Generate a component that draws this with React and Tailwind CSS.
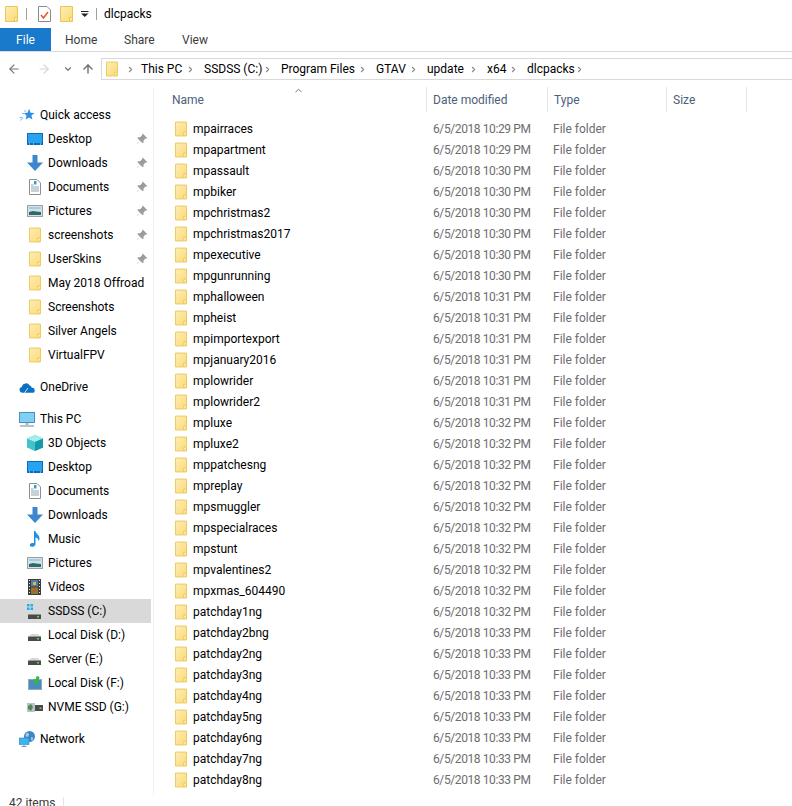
import { ArrowLeft, ArrowRight, ArrowUp, ChevronDown, ChevronRight, ChevronUp } from 'lucide-react';

const files = [
  ['mpairraces', '10:29'], ['mpapartment', '10:29'], ['mpassault', '10:30'], ['mpbiker', '10:30'],
  ['mpchristmas2', '10:30'], ['mpchristmas2017', '10:30'], ['mpexecutive', '10:30'], ['mpgunrunning', '10:30'],
  ['mphalloween', '10:31'], ['mpheist', '10:31'], ['mpimportexport', '10:31'], ['mpjanuary2016', '10:31'],
  ['mplowrider', '10:31'], ['mplowrider2', '10:31'], ['mpluxe', '10:32'], ['mpluxe2', '10:32'],
  ['mppatchesng', '10:32'], ['mpreplay', '10:32'], ['mpsmuggler', '10:32'], ['mpspecialraces', '10:32'],
  ['mpstunt', '10:32'], ['mpvalentines2', '10:32'], ['mpxmas_604490', '10:32'], ['patchday1ng', '10:32'],
  ['patchday2bng', '10:33'], ['patchday2ng', '10:33'], ['patchday3ng', '10:33'], ['patchday4ng', '10:33'],
  ['patchday5ng', '10:33'], ['patchday6ng', '10:33'], ['patchday7ng', '10:33'], ['patchday8ng', '10:33'],
];

const crumbs = [
  ['This PC', 'w-[63px]'], ['SSDSS (C:)', 'w-[77px]'], ['Program Files', 'w-[95px]'], ['GTAV', 'w-[51px]'],
  ['update', 'w-[60px]'], ['x64', 'w-[40px]'], ['dlcpacks', 'w-[66px]'],
];

const Folder = ({ className = 'w-[13px] h-[16px]' }) => (
  <svg viewBox="0 0 13 16" className={className}>
    <defs>
      <linearGradient id="fold" x1="0" y1="0" x2="1" y2="1">
        <stop offset="0" stopColor="#fdeeb4" />
        <stop offset="1" stopColor="#fbd977" />
      </linearGradient>
    </defs>
    <path d="M.5.5h12v15H.5z" fill="url(#fold)" stroke="#ecc655" />
    <path d="M9.5 15.5v-4h3" fill="#fff3c4" stroke="#ecc655" />
  </svg>
);

const Pin = () => (
  <svg viewBox="0 0 12 12" className="w-3 h-3">
    <path d="M7 .8l4.2 4.2-1 .7-.7-.2-2 2 .1 1.9-.9.9L4 7.8 1.4 10.8l-.4-.4L3.900 7.700 1.300 5.100l.9-.9 1.900.1 2-2-.2-.7z" fill="#9c9c9c" />
  </svg>
);

const QuickStar = () => (
  <svg viewBox="0 0 16 14" className="w-4 h-[14px]">
    <path d="M10 .8l1.500 3.900 4 .3-3.100 2.600 1 4L10 9.400l-3.400 2.200 1-4-3-2.600 4-.3z" fill="#2a8fe3" />
    <path d="M5 3h2.500M3 5.500h2.500M1 12.500l3-2.500M.5 9.500h3" stroke="#7ebcf0" fill="none" />
  </svg>
);

const DesktopIcon = () => (
  <svg viewBox="0 0 16 12" className="w-4 h-3">
    <rect width="16" height="12" fill="#0c6bbd" />
    <rect x="1" y="1" width="14" height="9" fill="#27a3ef" />
    <path d="M2 11h1M6 11h1M13 11h1" stroke="#cfe8fa" />
  </svg>
);

const DownloadIcon = () => (
  <svg viewBox="0 0 16 16" className="w-4 h-4">
    <path d="M5.500 0h5v7.500H16L8 16 0 7.500h5.500z" fill="#3e87d0" />
  </svg>
);

const DocumentIcon = () => (
  <svg viewBox="0 0 12 16" className="w-3 h-4">
    <path d="M.5.500h7.500l3.500 3.500v11.500H.5z" fill="#fff" stroke="#8e8e8e" />
    <path d="M2 6h2.500M2 8h8M2 10h8M2 12h8" stroke="#8ea3b5" />
    <path d="M5 2h2.500v3.500H5z" fill="#30a5c9" />
  </svg>
);

const PicturesIcon = () => (
  <svg viewBox="0 0 16 12" className="w-4 h-3">
    <rect x=".5" y=".5" width="15" height="11" fill="#cfe2ee" stroke="#a0a0a0" />
    <path d="M2 7l4-1 3 .5 5 .5v3H2z" fill="#2f6b62" />
    <path d="M2 2h12v2H2z" fill="#a7cbe2" />
  </svg>
);

const OneDriveIcon = () => (
  <svg viewBox="0 0 16 11" className="w-4 h-[11px]">
    <path d="M3.300 10.800a3 3 0 0 1-.6-5.900 4.300 4.300 0 0 1 8-1.300 3 3 0 0 1 2 2.200 2.600 2.600 0 0 1 3 2.400 2.500 2.500 0 0 1-2.600 2.600z" fill="#0b6fc2" />
    <path d="M5.500 10.800L9 6" stroke="#fff" strokeWidth=".8" />
  </svg>
);

const ThisPcIcon = () => (
  <svg viewBox="0 0 16 15" className="w-4 h-[15px]">
    <rect x=".5" y=".5" width="15" height="10" fill="#7fd0f5" stroke="#4d8fb8" />
    <path d="M6.500 11h3v2h-3z" fill="#a9b8c4" />
    <path d="M1 14h14" stroke="#9fb0bd" strokeWidth="1.500" />
  </svg>
);

const CubeIcon = () => (
  <svg viewBox="0 0 16 16" className="w-4 h-4">
    <path d="M8 0l8 3.500v9L8 16l-8-3.500v-9z" fill="#40c4cc" />
    <path d="M8 0l8 3.500L8 7 0 3.500z" fill="#a6ebed" />
    <path d="M8 7l8-3.500v9L8 16z" fill="#159ba8" />
  </svg>
);

const MusicIcon = () => (
  <svg viewBox="0 0 12 16" className="w-3 h-4">
    <path d="M5 0h1.500c.3 3 4.500 4 4 8-.2 1-.7 1.500-1 2 .2-2-1.500-3.300-3-3.500v6.500c0 2-2 2.800-3.800 2.800C1 15.800.5 14.500 1 13.500c.7-1.200 2.500-1.700 4-1.200z" fill="#1e8fe8" />
  </svg>
);

const VideosIcon = () => (
  <svg viewBox="0 0 13 16" className="w-[13px] h-4">
    <rect width="13" height="16" fill="#3c3c3c" />
    <rect x="3" y="1" width="7" height="6.500" fill="#4a7fb5" />
    <rect x="3" y="8.500" width="7" height="6.500" fill="#8c7a2e" />
    <path d="M5 3h3v3H5z" fill="#e3b62b" />
    <path d="M5 10h3v3H5z" fill="#c9552c" />
    <path d="M1 1.500h1M1 4.500h1M1 7.500h1M1 10.500h1M1 13.500h1M11 1.500h1M11 4.500h1M11 7.500h1M11 10.500h1M11 13.500h1" stroke="#e6e6e6" />
  </svg>
);

const Drive = () => (
  <g>
    <path d="M2 8.500c.5-1.500 1.500-2.500 3-2.500h5c1.500 0 2.500 1 3 2.500z" fill="#d8d8d8" />
    <rect x="1" y="8.500" width="13" height="4.500" fill="#4a4a4a" />
    <rect x="10" y="10" width="2" height="1.500" fill="#4ee04e" />
  </g>
);

const DriveIcon = () => (
  <svg viewBox="0 0 16 14" className="w-4 h-[14px]"><Drive /></svg>
);

const SystemDriveIcon = () => (
  <svg viewBox="0 0 16 16" className="w-4 h-4">
    <path d="M0 1h2.500v2.500H0zM3.500 1H6v2.500H3.500zM0 4.500h2.500V7H0zM3.500 4.500H6V7H3.500z" fill="#19b2ef" />
    <g transform="translate(0 3)"><Drive /></g>
  </svg>
);

const RemovableIcon = () => (
  <svg viewBox="0 0 14 14" className="w-[14px] h-[14px]">
    <rect x=".5" y="3.500" width="13" height="10" fill="#4b8bc4" stroke="#8fa9bf" />
    <path d="M7 0h3v4h2.500L8 9.500 4.500 4H7z" fill="#37b34a" transform="rotate(20 8 5)" />
  </svg>
);

const SharedDriveIcon = () => (
  <svg viewBox="0 0 16 12" className="w-4 h-3">
    <rect y="2" width="8" height="9" fill="#b9c4c4" />
    <path d="M1 5l3-2 2 3-2 4-3-2z" fill="#4f8a5a" />
    <rect x="8" y="4" width="8" height="6" fill="#4a4a4a" />
    <rect x="12.500" y="6.500" width="2" height="1.500" fill="#4ee04e" />
  </svg>
);

const NetworkIcon = () => (
  <svg viewBox="0 0 16 16" className="w-4 h-4">
    <circle cx="10.500" cy="5.500" r="5.500" fill="#3f85c6" />
    <path d="M8 1.500c2 .5 2.500 2 1.500 3.500s-2 1-3 0c0-1.500.5-3 1.500-3.500zM13 6c1 .5 1.500 1.500 1 3-1 1-2 .5-2-1s0-2 1-2z" fill="#a3c8e6" />
    <rect y="7" width="10" height="6.500" fill="#3db3ef" stroke="#2d86bd" strokeWidth=".6" />
    <path d="M2.500 15.500h5M5 13.500v2" stroke="#6d9cc0" />
  </svg>
);

const SideItem = ({ icon, label, pinned, selected }) => (
  <div className={`flex items-center h-6 w-[151px] pl-[27px] text-[#000] ${selected ? 'bg-[#d9d9d9]' : ''}`}>
    <span className="w-[21px] shrink-0 flex items-center">{icon}</span>
    <span className="flex-1 whitespace-nowrap">{label}</span>
    {pinned && <span className="w-[15px] shrink-0"><Pin /></span>}
  </div>
);

const SideHead = ({ icon, label }) => (
  <div className="flex items-center h-6 pl-[19px] text-[#000]">
    <span className="w-[21px] shrink-0 flex items-center">{icon}</span>
    <span>{label}</span>
  </div>
);

const HeaderCell = ({ label, className }) => (
  <div className={`h-[25px] border-r border-[#e5e5e5] flex items-center pl-[6px] ${className}`}>{label}</div>
);

export default function App() {
  return (
    <div className="w-[792px] h-[806px] overflow-hidden flex flex-col bg-white text-xs font-['Roboto',sans-serif] text-[#000]">
      {/* Title bar */}
      <div className="h-7 shrink-0 flex items-center">
        <span className="ml-[5px] flex"><Folder /></span>
        <span className="ml-[8px] h-3 w-px bg-[#a0a0a0]" />
        <svg viewBox="0 0 13 16" className="ml-[11px] w-[13px] h-4">
          <path d="M.5.500h8.500l3.500 3.500v11.500H.5z" fill="#fff" stroke="#8a8a8a" />
          <path d="M3 9l2.500 3L10 6" stroke="#e2572b" strokeWidth="1.500" fill="none" />
        </svg>
        <span className="ml-[9px] flex"><Folder /></span>
        <svg viewBox="0 0 8 6" className="ml-[8px] w-2 h-[6px]">
          <path d="M0 .5h7.500" stroke="#222" />
          <path d="M0 2.500h7.500L3.750 6z" fill="#222" />
        </svg>
        <span className="ml-[7px] h-3 w-px bg-[#a0a0a0]" />
        <span className="ml-[7px]">dlcpacks</span>
      </div>

      {/* Ribbon tabs */}
      <div className="h-6 shrink-0 flex border-b border-[#dadada]">
        <div className="w-[51px] h-[23px] bg-[#1979ca] text-white flex items-center justify-center">File</div>
        <span className="ml-[14px] w-[59px] h-[23px] flex items-center text-[#3b3b3b]">Home</span>
        <span className="w-[58px] h-[23px] flex items-center text-[#3b3b3b]">Share</span>
        <span className="h-[23px] flex items-center text-[#3b3b3b]">View</span>
      </div>

      {/* Address row */}
      <div className="h-[33px] shrink-0 flex items-start pt-[6px]">
        <div className="w-[101px] h-[22px] shrink-0 flex items-center">
          <ArrowLeft className="ml-[7px] w-[14px] h-[14px] text-[#767676]" strokeWidth={2} />
          <ArrowRight className="ml-[16px] w-[14px] h-[14px] text-[#d4d4d4]" strokeWidth={2} />
          <ChevronDown className="ml-[12px] w-[10px] h-[10px] text-[#7a7a7a]" strokeWidth={3} />
          <ArrowUp className="ml-[8px] w-[14px] h-[14px] text-[#767676]" strokeWidth={2.500} />
        </div>
        <div className="flex-1 h-[22px] border-y border-l border-[#d9d9d9] flex items-center pl-[4px]">
          <span className="flex w-[20px]"><Folder className="w-[12px] h-[16px]" /></span>
          <ChevronRight className="w-[9px] h-[9px] mr-[6px] text-[#8a8a8a]" strokeWidth={3} />
          {crumbs.map(([label, w]) => (
            <span key={label} className={`flex items-center justify-between pr-[9px] ${w}`}>
              <span className="whitespace-nowrap">{label}</span>
              <ChevronRight className="w-[9px] h-[9px] shrink-0 text-[#8a8a8a]" strokeWidth={3} />
            </span>
          ))}
        </div>
      </div>

      <div className="flex-1 min-h-0 flex">
        {/* Navigation pane */}
        <div className="w-[154px] shrink-0 border-r border-[#f0f0f0] mt-[3px] pt-[15px] flex flex-col gap-2">
          <div>
            <SideHead icon={<QuickStar />} label="Quick access" />
            <SideItem icon={<DesktopIcon />} label="Desktop" pinned />
            <SideItem icon={<DownloadIcon />} label="Downloads" pinned />
            <SideItem icon={<span className="pl-[2px] flex"><DocumentIcon /></span>} label="Documents" pinned />
            <SideItem icon={<PicturesIcon />} label="Pictures" pinned />
            <SideItem icon={<span className="pl-[2px] flex"><Folder className="w-3 h-4" /></span>} label="screenshots" pinned />
            <SideItem icon={<span className="pl-[2px] flex"><Folder className="w-3 h-4" /></span>} label="UserSkins" pinned />
            <SideItem icon={<span className="pl-[2px] flex"><Folder className="w-3 h-4" /></span>} label="May 2018 Offroad" />
            <SideItem icon={<span className="pl-[2px] flex"><Folder className="w-3 h-4" /></span>} label="Screenshots" />
            <SideItem icon={<span className="pl-[2px] flex"><Folder className="w-3 h-4" /></span>} label="Silver Angels" />
            <SideItem icon={<span className="pl-[2px] flex"><Folder className="w-3 h-4" /></span>} label="VirtualFPV" />
          </div>
          <SideHead icon={<OneDriveIcon />} label="OneDrive" />
          <div>
            <SideHead icon={<ThisPcIcon />} label="This PC" />
            <SideItem icon={<CubeIcon />} label="3D Objects" />
            <SideItem icon={<DesktopIcon />} label="Desktop" />
            <SideItem icon={<span className="pl-[2px] flex"><DocumentIcon /></span>} label="Documents" />
            <SideItem icon={<DownloadIcon />} label="Downloads" />
            <SideItem icon={<span className="pl-[2px] flex"><MusicIcon /></span>} label="Music" />
            <SideItem icon={<PicturesIcon />} label="Pictures" />
            <SideItem icon={<span className="pl-[1px] flex"><VideosIcon /></span>} label="Videos" />
            <SideItem icon={<SystemDriveIcon />} label="SSDSS (C:)" selected />
            <SideItem icon={<DriveIcon />} label="Local Disk (D:)" />
            <SideItem icon={<DriveIcon />} label="Server (E:)" />
            <SideItem icon={<span className="pl-[1px] flex"><RemovableIcon /></span>} label="Local Disk (F:)" />
            <SideItem icon={<SharedDriveIcon />} label="NVME SSD (G:)" />
          </div>
          <SideHead icon={<NetworkIcon />} label="Network" />
        </div>

        {/* File list */}
        <div className="flex-1 min-w-0 flex flex-col">
          <div className="relative flex pt-[2px] text-[#4c607a]">
            <ChevronUp className="absolute left-[139px] top-0 w-[11px] h-[11px] text-[#6d6d6d]" strokeWidth={2} />
            <HeaderCell label="Name" className="w-[273px] pl-[18px]" />
            <HeaderCell label="Date modified" className="w-[121px]" />
            <HeaderCell label="Type" className="w-[119px]" />
            <HeaderCell label="Size" className="w-[80px]" />
          </div>
          <div className="mt-[6px]">
            {files.map(([name, time]) => (
              <div key={name} className="h-[21px] flex items-center">
                <span className="ml-[21px] w-[18px] flex"><Folder className="w-3 h-4" /></span>
                <span className="w-[240px]">{name}</span>
                <span className="w-[120px] text-[#6d6d6d] tracking-[-0.4px]">6/5/2018 {time} PM</span>
                <span className="text-[#6d6d6d]">File folder</span>
              </div>
            ))}
          </div>
        </div>
      </div>

      {/* Status bar, cut off by the window */}
      <div className="h-[11px] shrink-0 overflow-hidden flex items-start text-[#3b3b3b]">
        <span className="pl-[9px] w-[63px] leading-4">42 items</span>
        <span className="mt-[2px] h-[9px] w-px bg-[#e5e5e5]" />
      </div>
    </div>
  );
}
